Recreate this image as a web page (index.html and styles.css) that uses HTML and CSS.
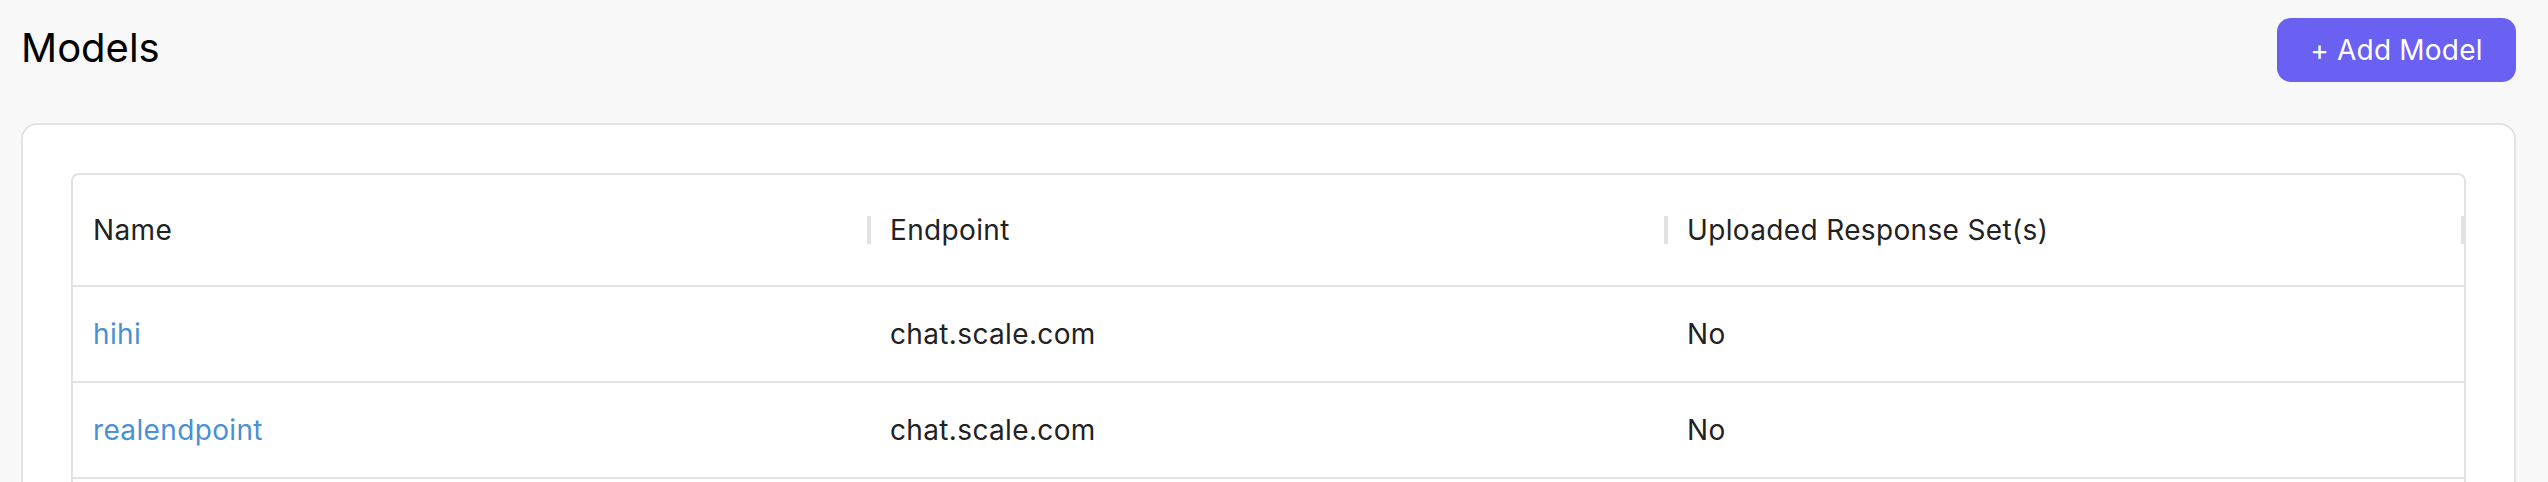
FILE: index.html
```html
<!DOCTYPE html>
<html>
<head>
<meta charset="utf-8">
<link rel="stylesheet" href="styles.css">
</head>
<body>
<div class="page">
  <header class="topbar">
    <h1 class="title">Models</h1>
    <button class="add-btn">+ Add Model</button>
  </header>
  <section class="card">
    <div class="table">
      <div class="row head">
        <div class="cell">Name</div>
        <div class="cell">Endpoint</div>
        <div class="cell">Uploaded Response Set(s)</div>
      </div>
      <div class="row">
        <div class="cell"><a class="link" href="#">hihi</a></div>
        <div class="cell">chat.scale.com</div>
        <div class="cell">No</div>
      </div>
      <div class="row">
        <div class="cell"><a class="link" href="#">realendpoint</a></div>
        <div class="cell">chat.scale.com</div>
        <div class="cell">No</div>
      </div>
      <div class="row">
        <div class="cell"></div>
        <div class="cell"></div>
        <div class="cell"></div>
      </div>
    </div>
  </section>
</div>
</body>
</html>
```

FILE: styles.css
```css
* { box-sizing: border-box; }
html, body {
  margin: 0;
  background: #f8f8f8;
  font-family: Inter, "Noto Sans", sans-serif;
  color: #1f1f1f;
  overflow: hidden;
}
.page {
  padding: 18px 32px 0 21px;
  height: 482px;
  overflow: hidden;
}
.topbar {
  display: flex;
  justify-content: space-between;
  align-items: center;
  height: 64px;
}
.title {
  margin: 0 0 6px 0;
  font-size: 40px;
  font-weight: 400;
  color: #000;
}
.add-btn {
  height: 64px;
  width: 239px;
  border: none;
  border-radius: 14px;
  background: #6a60f1;
  color: #fff;
  font-family: Inter, "Noto Sans", sans-serif;
  font-size: 28px;
  font-weight: 400;
  letter-spacing: 0.2px;
  padding: 0;
}
.card {
  margin-top: 41px;
  background: #fff;
  border: 2px solid #e2e2e2;
  border-radius: 16px;
  padding: 48px 48px 0 48px;
  height: 440px;
}
.table {
  border: 2px solid #e2e2e2;
  border-bottom: none;
  border-radius: 8px 8px 0 0;
}
.row {
  display: grid;
  grid-template-columns: 1fr 1fr 1fr;
  height: 96px;
  border-bottom: 2px solid #e2e2e2;
  align-items: center;
  font-size: 28px;
  letter-spacing: 0.35px;
}
.row.head {
  height: 112px;
}
.cell {
  position: relative;
  padding-left: 20px;
  white-space: nowrap;
  color: #222;
}
.head .cell::after {
  content: "";
  position: absolute;
  right: -1px;
  top: 50%;
  width: 4px;
  height: 28px;
  margin-top: -14px;
  background: #e2e2e2;
}
.link {
  color: #4a90d4;
  text-decoration: none;
}
```
